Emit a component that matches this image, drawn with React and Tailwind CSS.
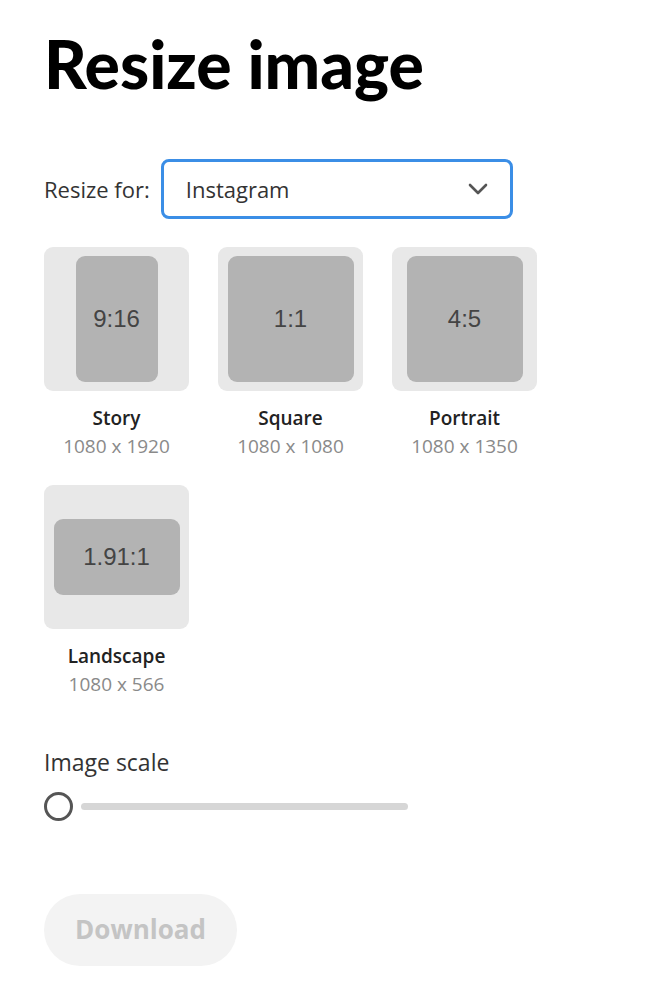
import React from "react";

const sizes = [
  { name: "Story", dims: "1080 x 1920", ratio: "9:16", inner: "w-[82px] h-[126px]" },
  { name: "Square", dims: "1080 x 1080", ratio: "1:1", inner: "w-[126px] h-[126px]" },
  { name: "Portrait", dims: "1080 x 1350", ratio: "4:5", inner: "w-[116px] h-[126px]" },
  { name: "Landscape", dims: "1080 x 566", ratio: "1.91:1", inner: "w-[126px] h-[76px]" },
];

const SizeCard = ({ item }) => {
  return (
    <div className="flex flex-col items-center w-[145px]">
      <div className="w-[145px] h-[144px] rounded-[9px] bg-[#e8e8e8] flex items-center justify-center">
        <div
          className={`${item.inner} rounded-[9px] bg-[#b3b3b3] flex items-center justify-center text-[24px] text-[#444] font-['Liberation_Sans',sans-serif]`}
        >
          {item.ratio}
        </div>
      </div>
      <div className="mt-[15px] text-[19px] leading-[24px] font-semibold text-[#222]">
        {item.name}
      </div>
      <div className="mt-[4px] text-[19px] leading-[24px] text-[#8a8a8a]">{item.dims}</div>
    </div>
  );
};

const App = () => {
  return (
    <div className="min-h-screen bg-white px-[44px] pt-[26px] font-['Open_Sans',sans-serif] text-[#222]">
      <h1 className="text-[66px] leading-[76px] font-black text-black font-['Lato',sans-serif]">
        Resize image
      </h1>

      <div className="mt-[57px] flex items-center gap-[11px]">
        <span className="text-[22px] text-[#333]">Resize for:</span>
        <div className="w-[352px] h-[60px] border-[3px] border-[#3b8ee6] rounded-[8px] flex items-center justify-between pl-[22px] pr-[22px]">
          <span className="text-[22px] text-[#333]">Instagram</span>
          <svg width="20" height="12" viewBox="0 0 20 12" fill="none">
            <path d="M2 2l8 8 8-8" stroke="#555" strokeWidth="2.6" strokeLinecap="round" strokeLinejoin="round" />
          </svg>
        </div>
      </div>

      <div className="mt-[28px] grid grid-cols-[145px_145px_145px] gap-x-[29px] gap-y-[27px]">
        {sizes.map((s) => (
          <SizeCard key={s.name} item={s} />
        ))}
      </div>

      <div className="mt-[49px] text-[23px] text-[#333]">Image scale</div>
      <div className="mt-[12px] flex items-center gap-[8px]">
        <div className="w-[29px] h-[29px] rounded-full border-[3px] border-[#555] bg-white" />
        <div className="w-[327px] h-[7px] rounded-full bg-[#d6d6d6]" />
      </div>

      <button className="mt-[73px] w-[193px] h-[72px] rounded-full bg-[#f3f3f3] text-[26px] font-bold text-[#c4c4c4]">
        Download
      </button>
    </div>
  );
};

export default App;
